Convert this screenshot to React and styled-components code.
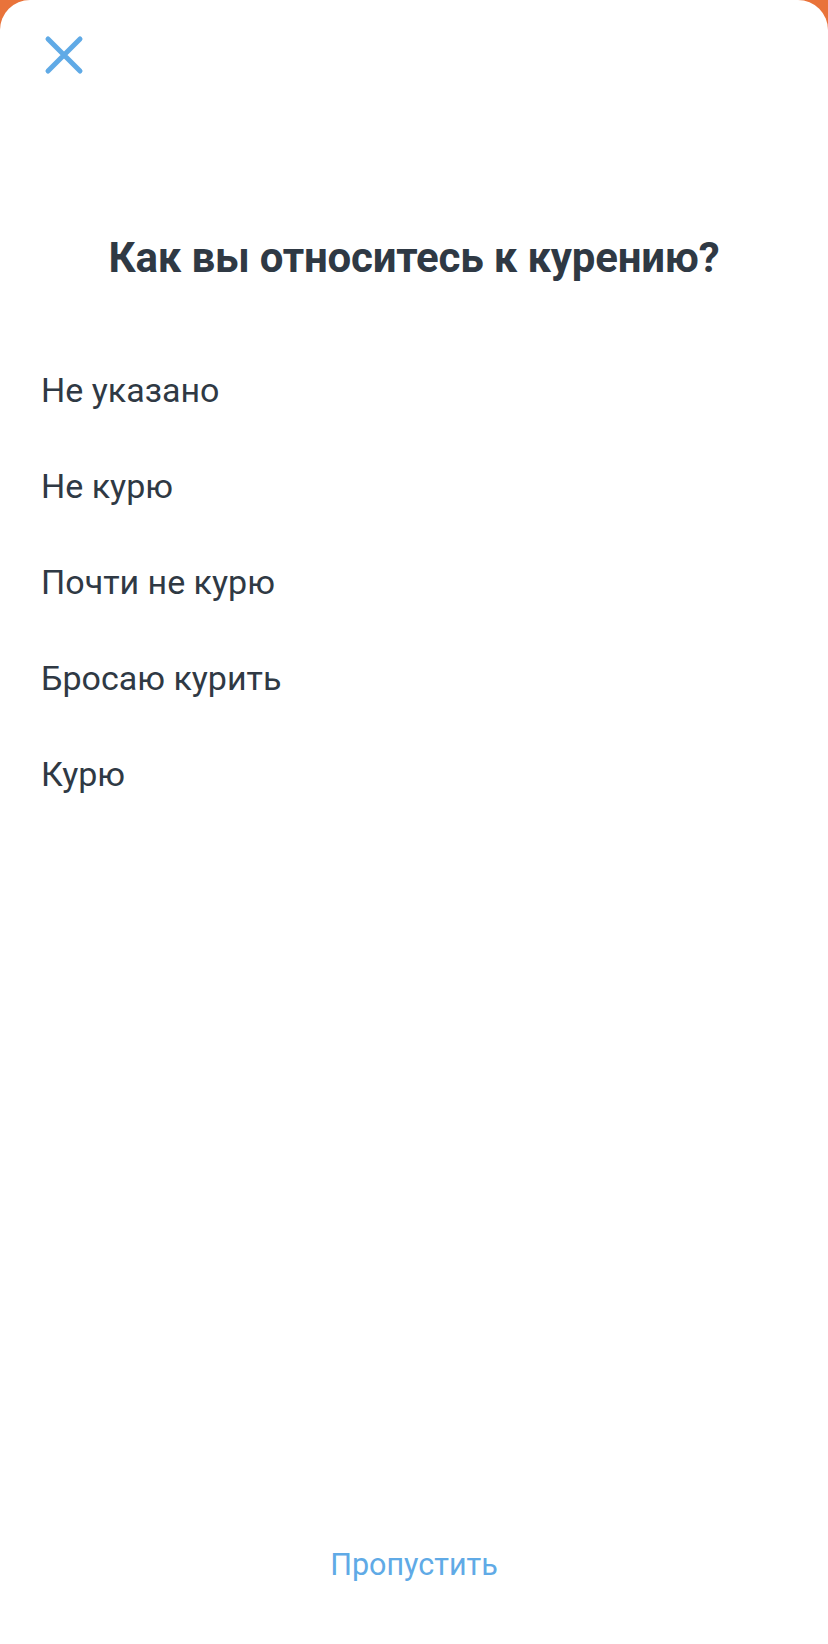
import React from "react";
import styled, { createGlobalStyle } from "styled-components";

const GlobalStyle = createGlobalStyle`
  html, body {
    margin: 0;
    padding: 0;
    background: #e9733a;
  }
  body {
    font-family: Roboto, "Noto Sans", "Liberation Sans", sans-serif;
  }
`;

const Sheet = styled.div`
  box-sizing: border-box;
  width: 828px;
  height: 1644px;
  background: #fff;
  border-radius: 30px 30px 0 0;
  display: flex;
  flex-direction: column;
`;

const TopBar = styled.div`
  height: 110px;
  padding: 0 0 0 40px;
  display: flex;
  align-items: center;
`;

const CloseButton = styled.button`
  width: 48px;
  height: 48px;
  padding: 0;
  border: 0;
  background: none;
  display: flex;
  align-items: center;
  justify-content: center;
  cursor: pointer;
`;

const Title = styled.h1`
  margin: 123px 0 0;
  text-align: center;
  font-size: 42px;
  font-weight: 700;
  color: #2f3944;
  letter-spacing: -0.2px;
`;

const Options = styled.ul`
  list-style: none;
  margin: 60px 0 0;
  padding: 0 0 0 41px;
  display: flex;
  flex-direction: column;
`;

const Option = styled.li`
  height: 96px;
  display: flex;
  align-items: center;
  font-size: 34px;
  font-weight: 400;
  color: #2f3944;
`;

const Footer = styled.div`
  margin-top: auto;
  padding-bottom: 62px;
  display: flex;
  justify-content: center;
`;

const SkipButton = styled.button`
  border: 0;
  background: none;
  padding: 0;
  font-family: inherit;
  font-size: 30.5px;
  color: #60aae6;
  cursor: pointer;
`;

const options = ["Не указано", "Не курю", "Почти не курю", "Бросаю курить", "Курю"];

const App = () => {
  return (
    <>
      <GlobalStyle />
      <Sheet>
        <TopBar>
          <CloseButton aria-label="Закрыть">
            <svg width="40" height="40" viewBox="0 0 40 40">
              <path
                d="M4 4 L36 36 M36 4 L4 36"
                stroke="#60aae6"
                strokeWidth="5"
                strokeLinecap="round"
                fill="none"
              />
            </svg>
          </CloseButton>
        </TopBar>
        <Title>{"Как вы относитесь к курению?"}</Title>
        <Options>
          {options.map(item => (
            <Option key={item}>{item}</Option>
          ))}
        </Options>
        <Footer>
          <SkipButton>{"Пропустить"}</SkipButton>
        </Footer>
      </Sheet>
    </>
  );
};

export default App;
